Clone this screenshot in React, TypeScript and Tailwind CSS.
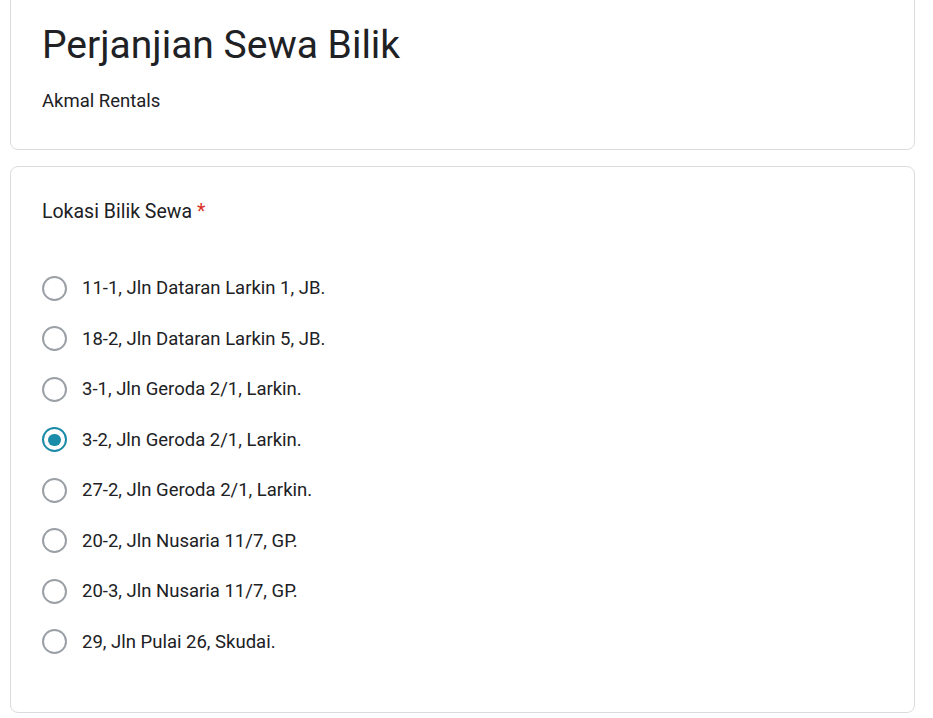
import { useState } from 'react';

const options = [
  '11-1, Jln Dataran Larkin 1, JB.',
  '18-2, Jln Dataran Larkin 5, JB.',
  '3-1, Jln Geroda 2/1, Larkin.',
  '3-2, Jln Geroda 2/1, Larkin.',
  '27-2, Jln Geroda 2/1, Larkin.',
  '20-2, Jln Nusaria 11/7, GP.',
  '20-3, Jln Nusaria 11/7, GP.',
  '29, Jln Pulai 26, Skudai.',
];

export default function App() {
  const [selected, setSelected] = useState(3);

  return (
    <div className="min-h-screen bg-white px-[10px] text-[#202124] [font-family:Roboto,'Liberation_Sans',sans-serif] overflow-hidden">
      <div className="w-[905px] -mt-[11px] rounded-lg border border-[#dadce0] pl-[31px] pr-6 pt-[31px] pb-[35px]">
        <h1 className="text-[39px] leading-[48px]">Perjanjian Sewa Bilik</h1>
        <p className="mt-[19px] text-[18.5px] leading-[26px]">Akmal Rentals</p>
      </div>

      <div className="mt-4 w-[905px] rounded-lg border border-[#dadce0] pl-[31px] pr-6 pt-[30px] pb-[45px]">
        <div className="text-[19.5px] leading-[30px]">
          Lokasi Bilik Sewa <span className="text-[#d93025]">*</span>
        </div>

        <div className="mt-[36px] flex flex-col">
          {options.map((label, i) => {
            const checked = selected === i;
            return (
              <button
                key={label}
                type="button"
                onClick={() => setSelected(i)}
                className="flex h-[50.5px] items-center gap-[15px] text-left"
              >
                <span
                  className={
                    checked
                      ? 'flex h-[25px] w-[25px] items-center justify-center rounded-full border-[2.5px] border-[#1a8ba8]'
                      : 'flex h-[25px] w-[25px] items-center justify-center rounded-full border-[2.5px] border-[#9aa0a6]'
                  }
                >
                  {checked && <span className="h-[12.5px] w-[12.5px] rounded-full bg-[#1a8ba8]" />}
                </span>
                <span className="text-[18.5px] leading-[26px]">{label}</span>
              </button>
            );
          })}
        </div>
      </div>
    </div>
  );
}
